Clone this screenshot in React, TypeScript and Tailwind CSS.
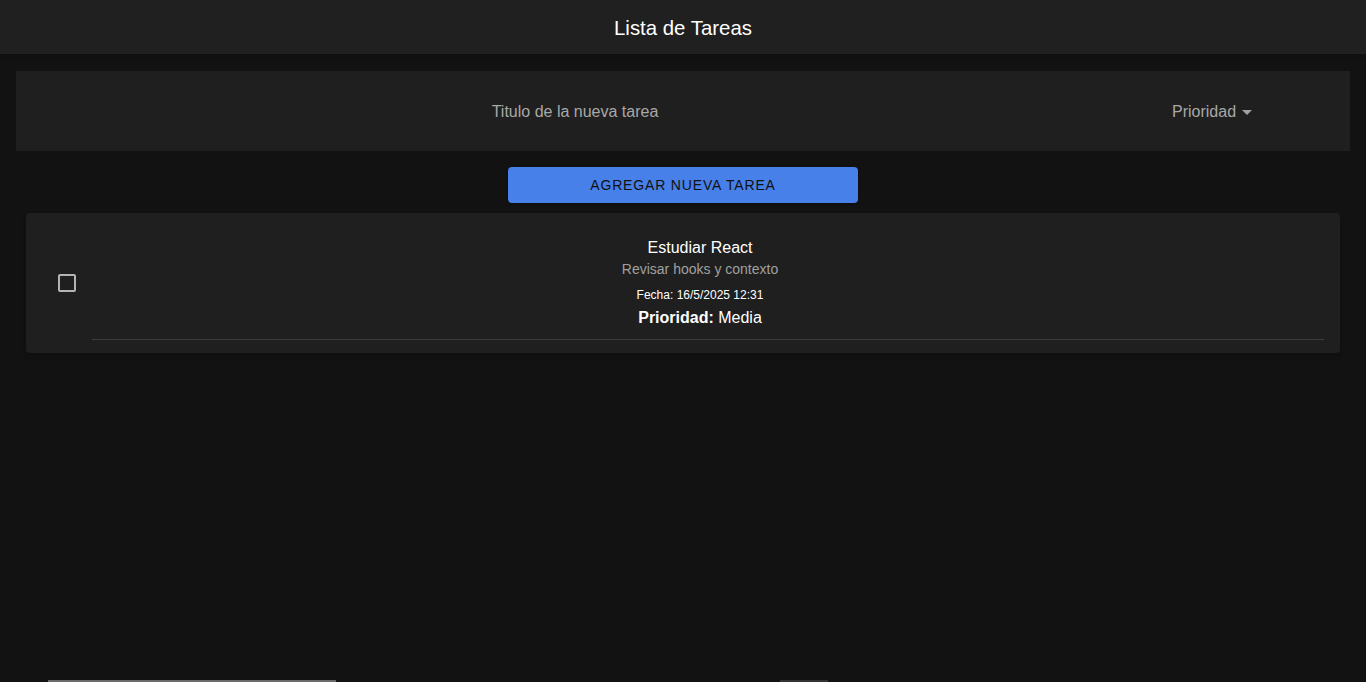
import React, { useState } from 'react';

interface Task {
  id: number;
  title: string;
  description: string;
  date: string;
  priority: string;
  done: boolean;
}

const App: React.FC = () => {
  const [title, setTitle] = useState('');
  const [tasks, setTasks] = useState<Task[]>([
    {
      id: 1,
      title: 'Estudiar React',
      description: 'Revisar hooks y contexto',
      date: '16/5/2025 12:31',
      priority: 'Media',
      done: false,
    },
  ]);

  const toggle = (id: number) => {
    setTasks(tasks.map((t) => (t.id === id ? { ...t, done: !t.done } : t)));
  };

  return (
    <div className="min-h-screen bg-[#121212] font-['Liberation_Sans',Arial,sans-serif] text-white">
      <header className="h-[54px] bg-[#202020] flex items-center justify-center shadow-md pt-[2px]">
        <h1 className="text-[20.4px] leading-none">Lista de Tareas</h1>
      </header>

      <div className="px-4 pt-[17px]">
        <div className="h-[80px] bg-[#1f1f1f] flex items-center px-4 pt-[2px]">
          <input
            type="text"
            value={title}
            onChange={(e) => setTitle(e.target.value)}
            placeholder="Titulo de la nueva tarea"
            className="w-[1086px] bg-transparent text-center text-[16px] text-white placeholder:text-[#a8a8a8] focus:outline-none"
          />
          <div className="ml-[54px] flex items-center gap-[6px] text-[16px] text-[#a8a8a8] cursor-pointer">
            <span>Prioridad</span>
            <svg width="10" height="5" viewBox="0 0 10 5" className="mt-[1px]">
              <path d="M0 0 L10 0 L5 5 Z" fill="#a0a0a0" />
            </svg>
          </div>
        </div>

        <div className="flex justify-center pt-4">
          <button className="w-[350px] h-[36px] rounded-[4px] bg-[#4780e8] text-[#111111] text-[14px] font-medium uppercase tracking-[0.06em] shadow">
            Agregar nueva tarea
          </button>
        </div>

        <div className="px-[10px] pt-[10px]">
          {tasks.map((task) => (
            <div
              key={task.id}
              className="h-[140px] bg-[#1f1f1f] rounded-[4px] shadow-md flex items-center pl-4 pr-4"
            >
              <div className="w-[50px] flex items-center">
                <button
                  onClick={() => toggle(task.id)}
                  className="ml-4 w-[18px] h-[18px] border-2 border-[#b4b4b4] rounded-[2px] flex items-center justify-center"
                >
                  {task.done && <span className="w-2 h-2 bg-[#b4b4b4]" />}
                </button>
              </div>
              <div className="flex-1 flex flex-col self-stretch pt-[23px]">
                <div className="pr-4 flex flex-col items-center text-center">
                  <p className="text-[16px] leading-[24px]">{task.title}</p>
                  <p className="-mt-px text-[14px] leading-[20px] text-[#a0a0a0]">{task.description}</p>
                  <p className="mt-[8px] text-[12px] leading-[16px]">Fecha: {task.date}</p>
                  <p className="mt-[3px] text-[16px] leading-[24px]">
                    <span className="font-bold">Prioridad:</span> {task.priority}
                  </p>
                </div>
                <div className="mt-[9px] h-px bg-[#3c3c3c]" />
              </div>
            </div>
          ))}
        </div>
      </div>

      <div className="mt-[327px] flex h-[2px]">
        <div className="ml-[48px] w-[288px] bg-[#6a6a6a]" />
        <div className="ml-[444px] w-[48px] bg-[#333333]" />
      </div>
    </div>
  );
};

export default App;
